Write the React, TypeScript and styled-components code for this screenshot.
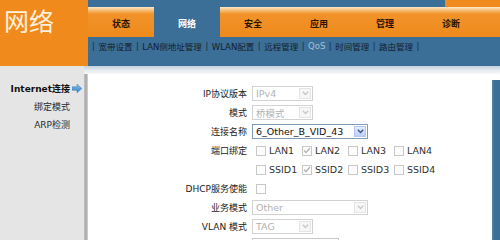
import React from "react";
import styled, { createGlobalStyle, css } from "styled-components";

const GlobalStyle = createGlobalStyle`
  html, body { margin: 0; padding: 0; background: #fff; }
  body {
    width: 500px;
    height: 240px;
    overflow: hidden;
    font-family: "DejaVu Sans", "Noto Sans CJK SC", sans-serif;
  }
`;

const BLUE = "#3b6f97";
const ORANGE = "#f08a1d";

const Page = styled.div`
  width: 500px;
  height: 240px;
  overflow: hidden;
  display: grid;
  grid-template-rows: 66px 1fr;
`;

const Header = styled.header`
  display: grid;
  grid-template-columns: 88px 1fr;
`;

const Brand = styled.div`
  background: ${ORANGE};
  color: #fdf0dc;
  font-family: "Noto Sans CJK SC", sans-serif;
  font-size: 25px;
  line-height: 1;
  padding: 8px 0 0 4px;
`;

const NavArea = styled.div`
  background: ${BLUE};
  display: flex;
  flex-direction: column;
`;

const CapRow = styled.div`
  height: 7px;
  display: flex;
  justify-content: flex-end;
`;

const Cap = styled.div`
  width: 55px;
  background: ${ORANGE};
`;

const TabRow = styled.nav`
  height: 30px;
  display: flex;
  background: linear-gradient(#fde9cb 0, #f8c27c 3px, #f1932a 7px, #ef8a1c 100%);
`;

const Tab = styled.div<{ $active?: boolean }>`
  width: 66px;
  display: flex;
  align-items: center;
  justify-content: center;
  padding-top: 3px;
  box-sizing: border-box;
  font-family: "Noto Sans CJK SC", sans-serif;
  font-size: 9px;
  font-weight: 700;
  color: #2a1300;
  ${(p) =>
    p.$active &&
    css`
      background: ${BLUE};
      color: #fff;
    `}
`;

const SubNav = styled.div`
  height: 17px;
  display: flex;
  align-items: center;
  gap: 3.5px;
  padding-left: 4px;
  font-size: 8.5px;
  color: #15202c;
`;

const SubLink = styled.span<{ $muted?: boolean }>`
  color: ${(p) => (p.$muted ? "#a7c1d5" : "#15202c")};
`;

const Sep = styled.span`
  color: #1c2a38;
`;

const Body = styled.div`
  display: grid;
  grid-template-columns: 84px 1fr;
  min-height: 0;
`;

const Sidebar = styled.aside`
  background: #e5e5e5;
  padding-top: 13px;
`;

const SideItem = styled.div<{ $current?: boolean }>`
  height: 18px;
  display: flex;
  align-items: center;
  justify-content: flex-end;
  gap: 2px;
  padding-right: 2px;
  font-size: 9px;
  font-weight: ${(p) => (p.$current ? 700 : 400)};
  color: ${(p) => (p.$current ? "#111" : "#2a2a2a")};
`;

const IconSlot = styled.span`
  width: 10px;
  height: 9px;
  display: flex;
`;

const Main = styled.main`
  display: flex;
  flex-direction: column;
  min-height: 0;
`;

const Band = styled.div`
  height: 8px;
  background: linear-gradient(#c3d2de, #e9eef2 60%, #f7f8f9);
`;

const Content = styled.div`
  flex: 1;
  display: grid;
  grid-template-columns: 4px 1fr 8px;
  min-height: 0;
`;

const Divider = styled.div`
  background: linear-gradient(to right, #c4c4c4, #a6a6a6 50%, #d6d6d6);
`;

const RightRail = styled.div`
  margin-top: 6px;
  background: linear-gradient(to right, #5a86a8, ${BLUE} 30%);
`;

const Form = styled.div`
  padding-top: 10px;
  display: flex;
  flex-direction: column;
`;

const Row = styled.div`
  height: 19px;
  display: grid;
  grid-template-columns: 159px 1fr;
  column-gap: 5px;
  align-items: center;
`;

const Label = styled.span`
  text-align: right;
  font-size: 9px;
  color: #222;
  white-space: nowrap;
`;

const SelectBox = styled.div<{ $w: number; $disabled?: boolean }>`
  width: ${(p) => p.$w}px;
  height: 15px;
  box-sizing: border-box;
  border: 1px solid ${(p) => (p.$disabled ? "#d2d2d2" : "#7f9db9")};
  background: #fff;
  display: flex;
  align-items: center;
`;

const SelectText = styled.span<{ $disabled?: boolean }>`
  flex: 1;
  padding-left: 3px;
  font-size: 9.5px;
  color: ${(p) => (p.$disabled ? "#b2b2b2" : "#111")};
  white-space: nowrap;
  overflow: hidden;
`;

const SelectArrow = styled.span<{ $disabled?: boolean }>`
  width: 12px;
  height: 11px;
  margin-right: 1px;
  box-sizing: border-box;
  display: flex;
  align-items: center;
  justify-content: center;
  border: 1px solid ${(p) => (p.$disabled ? "#e4e4e4" : "#b4c6ee")};
  background: ${(p) =>
    p.$disabled ? "#f7f7f7" : "linear-gradient(#e4ecfd, #bccff7)"};
`;

const TextBox = styled.div<{ $w: number }>`
  width: ${(p) => p.$w}px;
  height: 15px;
  box-sizing: border-box;
  border: 1px solid #c9c9c9;
  background: #fff;
`;

const CheckGroup = styled.div`
  display: grid;
  grid-template-columns: repeat(4, 46px);
  padding-left: 4px;
`;

const CheckItem = styled.label`
  display: flex;
  align-items: center;
  gap: 3px;
  font-size: 9.5px;
  color: #333;
  white-space: nowrap;
`;

const Box = styled.span`
  width: 10px;
  height: 10px;
  box-sizing: border-box;
  border: 1px solid #c8c8c8;
  background: #fcfcfc;
  display: flex;
  align-items: center;
  justify-content: center;
`;

const Chevron = ({ disabled }: { disabled?: boolean }) => (
  <svg width="7" height="5" viewBox="0 0 7 5">
    <path
      d="M0.8 0.8 L3.5 3.6 L6.2 0.8"
      fill="none"
      stroke={disabled ? "#c9c9c9" : "#3e5580"}
      strokeWidth="1.4"
    />
  </svg>
);

const Select = ({ w, value, disabled }: { w: number; value: string; disabled?: boolean }) => (
  <SelectBox $w={w} $disabled={disabled}>
    <SelectText $disabled={disabled}>{value}</SelectText>
    <SelectArrow $disabled={disabled}>
      <Chevron disabled={disabled} />
    </SelectArrow>
  </SelectBox>
);

const Check = ({ label, checked }: { label?: string; checked?: boolean }) => (
  <CheckItem>
    <Box>
      {checked && (
        <svg width="8" height="7" viewBox="0 0 8 7">
          <path d="M1 3.5 L3 5.5 L7 1" fill="none" stroke="#b4b4b4" strokeWidth="1.3" />
        </svg>
      )}
    </Box>
    {label}
  </CheckItem>
);

const Arrow = () => (
  <svg width="10" height="9" viewBox="0 0 10 9">
    <defs>
      <linearGradient id="ar" x1="0" y1="0" x2="0" y2="1">
        <stop offset="0" stopColor="#8cc4f0" />
        <stop offset="1" stopColor="#2f7fc4" />
      </linearGradient>
    </defs>
    <path d="M0 2.8 H5 V0.2 L9.8 4.5 L5 8.8 V6.2 H0 Z" fill="url(#ar)" stroke="#3b78b0" strokeWidth="0.5" />
  </svg>
);

const tabs = ["状态", "网络", "安全", "应用", "管理", "诊断"];
const subLinks = ["宽带设置", "LAN侧地址管理", "WLAN配置", "远程管理", "QoS", "时间管理", "路由管理"];

export default function App() {
  return (
    <>
      <GlobalStyle />
      <Page>
        <Header>
          <Brand>网络</Brand>
          <NavArea>
            <CapRow>
              <Cap />
            </CapRow>
            <TabRow>
              {tabs.map((t) => (
                <Tab key={t} $active={t === "网络"}>
                  {t}
                </Tab>
              ))}
            </TabRow>
            <SubNav>
              <Sep>|</Sep>
              {subLinks.map((s) => (
                <React.Fragment key={s}>
                  <SubLink $muted={s === "QoS"}>{s}</SubLink>
                  <Sep>|</Sep>
                </React.Fragment>
              ))}
            </SubNav>
          </NavArea>
        </Header>
        <Body>
          <Sidebar>
            <SideItem $current>
              Internet连接
              <IconSlot>
                <Arrow />
              </IconSlot>
            </SideItem>
            <SideItem>
              绑定模式
              <IconSlot />
            </SideItem>
            <SideItem>
              ARP检测
              <IconSlot />
            </SideItem>
          </Sidebar>
          <Main>
            <Band />
            <Content>
              <Divider />
              <Form>
                <Row>
                  <Label>IP协议版本</Label>
                  <Select w={61} value="IPv4" disabled />
                </Row>
                <Row>
                  <Label>模式</Label>
                  <Select w={61} value="桥模式" disabled />
                </Row>
                <Row>
                  <Label>连接名称</Label>
                  <Select w={116} value="6_Other_B_VID_43" />
                </Row>
                <Row>
                  <Label>端口绑定</Label>
                  <CheckGroup>
                    <Check label="LAN1" />
                    <Check label="LAN2" checked />
                    <Check label="LAN3" />
                    <Check label="LAN4" />
                  </CheckGroup>
                </Row>
                <Row>
                  <Label />
                  <CheckGroup>
                    <Check label="SSID1" />
                    <Check label="SSID2" checked />
                    <Check label="SSID3" />
                    <Check label="SSID4" />
                  </CheckGroup>
                </Row>
                <Row>
                  <Label>DHCP服务使能</Label>
                  <CheckGroup>
                    <Check />
                  </CheckGroup>
                </Row>
                <Row>
                  <Label>业务模式</Label>
                  <Select w={116} value="Other" disabled />
                </Row>
                <Row>
                  <Label>VLAN 模式</Label>
                  <Select w={61} value="TAG" disabled />
                </Row>
                <Row>
                  <Label />
                  <TextBox $w={87} />
                </Row>
              </Form>
              <RightRail />
            </Content>
          </Main>
        </Body>
      </Page>
    </>
  );
}
